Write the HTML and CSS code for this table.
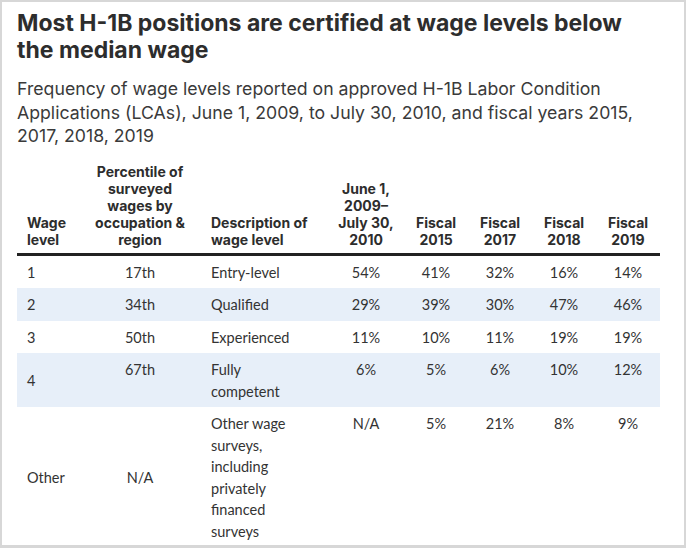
FILE: index.html
```html
<!DOCTYPE html>
<html lang="en">
<head>
<meta charset="utf-8">
<title>H-1B wage levels</title>
<link rel="stylesheet" href="styles.css">
</head>
<body>
<div class="frame">
  <h1 class="title">Most H-1B positions are certified at wage levels below the median wage</h1>
  <p class="subtitle">Frequency of wage levels reported on approved H-1B Labor Condition Applications (LCAs), June 1, 2009, to July 30, 2010, and fiscal years 2015, 2017, 2018, 2019</p>
  <table class="data">
    <colgroup>
      <col class="c-level">
      <col class="c-pct">
      <col class="c-desc">
      <col class="c-range">
      <col class="c-fy">
      <col class="c-fy">
      <col class="c-fy">
      <col class="c-fy">
    </colgroup>
    <thead>
      <tr>
        <th class="left">Wage level</th>
        <th class="pct">Percentile of surveyed wages by occupation &amp; region</th>
        <th class="left">Description of wage level</th>
        <th>June 1, 2009– July 30, 2010</th>
        <th>Fiscal 2015</th>
        <th>Fiscal 2017</th>
        <th>Fiscal 2018</th>
        <th>Fiscal 2019</th>
      </tr>
    </thead>
    <tbody>
      <tr>
        <td class="left mid">1</td><td>17th</td><td class="desc">Entry-level</td><td>54%</td><td>41%</td><td>32%</td><td>16%</td><td>14%</td>
      </tr>
      <tr class="alt">
        <td class="left mid">2</td><td>34th</td><td class="desc">Qualified</td><td>29%</td><td>39%</td><td>30%</td><td>47%</td><td>46%</td>
      </tr>
      <tr>
        <td class="left mid">3</td><td>50th</td><td class="desc">Experienced</td><td>11%</td><td>10%</td><td>11%</td><td>19%</td><td>19%</td>
      </tr>
      <tr class="alt">
        <td class="left mid">4</td><td>67th</td><td class="desc">Fully competent</td><td>6%</td><td>5%</td><td>6%</td><td>10%</td><td>12%</td>
      </tr>
      <tr>
        <td class="left mid">Other</td><td class="mid">N/A</td><td class="desc">Other wage surveys, including privately financed surveys</td><td>N/A</td><td>5%</td><td>21%</td><td>8%</td><td>9%</td>
      </tr>
    </tbody>
  </table>
</div>
</body>
</html>
```
FILE: styles.css
```css
* { box-sizing: border-box; }
html, body { margin: 0; padding: 0; background: #ffffff; }
body {
  font-family: "Lato", "Liberation Sans", sans-serif;
  color: #333333;
}
.frame {
  width: 686px;
  height: 548px;
  border: 2px solid #d7d7d7;
  border-bottom-width: 3px;
  padding: 8px 0 0 15px;
  overflow: hidden;
}
.title {
  margin: 0;
  font-family: "Inter", "Lato", sans-serif;
  font-size: 23px;
  line-height: 27px;
  font-weight: 700;
  color: #2d2d2d;
  padding-right: 30px;
}
.subtitle {
  margin: 13px 0 0 0;
  font-family: "Inter", "Lato", sans-serif;
  font-size: 17.7px;
  line-height: 23.5px;
  font-weight: 400;
  color: #3a3a3a;
  padding-right: 40px;
}
.data {
  margin-top: 11px;
  width: 643px;
  table-layout: fixed;
  border-collapse: collapse;
  font-size: 14.5px;
}
.c-level { width: 62px; }
.c-pct { width: 122px; }
.c-desc { width: 127px; }
.c-range { width: 76px; }
.c-fy { width: 64px; }
.data th {
  font-family: "Inter", "Lato", sans-serif;
  font-weight: 700;
  font-size: 14px;
  line-height: 17px;
  text-align: center;
  vertical-align: bottom;
  padding: 4px 5px 5px 5px;
  color: #2d2d2d;
  border-bottom: 3px solid #222222;
}
.data th.left { text-align: left; padding-left: 10px; }
.data th.pct { padding-left: 14px; padding-right: 14px; }
.data td {
  line-height: 21.5px;
  text-align: center;
  vertical-align: top;
  padding: 6px 6px 5px 6px;
  color: #333333;
}
.data td.left { text-align: left; padding-left: 10px; }
.data td.desc { text-align: left; padding-left: 10px; padding-right: 18px; }
.data td.mid { vertical-align: middle; }
.data tr.alt td { background: #e7eff9; }
```
